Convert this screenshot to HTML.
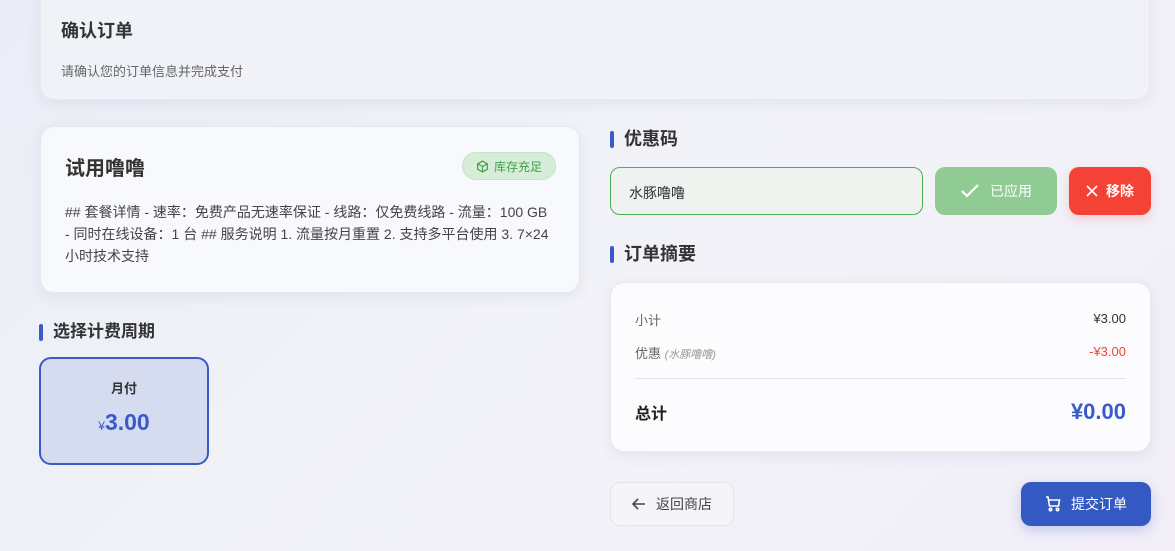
<!DOCTYPE html>
<html><head><meta charset="utf-8"><style>
*{box-sizing:border-box;margin:0;padding:0}
body{width:1175px;height:551px;overflow:hidden;font-family:"Liberation Sans","Noto Sans CJK SC",sans-serif;background:linear-gradient(135deg,#eaedf6 0%,#f2f3f8 50%,#f1eef8 100%);position:relative;color:#333}
.card{position:absolute;background:rgba(255,255,255,.75);border:1px solid #e6e8ef;border-radius:14px;box-shadow:0 4px 14px rgba(60,70,120,.08)}
.h{position:absolute;font-size:18px;font-weight:bold;color:#333;padding-left:14px;line-height:22px}
.h:before{content:"";position:absolute;left:0;top:3px;width:4px;height:17px;border-radius:2px;background:#3a5bc7}
.btn{position:absolute;border-radius:10px;display:flex;align-items:center;justify-content:center;font-size:14px}
</style></head><body>
<div class="card" style="left:40px;top:-20px;width:1110px;height:120px;background:rgba(240,242,248,.8)">
 <div style="position:absolute;left:20px;top:36px;font-size:18px;font-weight:bold;color:#333">确认订单</div>
 <div style="position:absolute;left:20px;top:80px;font-size:13px;color:#666">请确认您的订单信息并完成支付</div>
</div>
<div class="card" style="left:40px;top:126px;width:540px;height:167px;background:#f8f9fc">
 <div style="position:absolute;left:24px;top:25px;font-size:20px;font-weight:bold;color:#333">试用噜噜</div>
 <div style="position:absolute;left:421px;top:25px;width:94px;height:28px;border-radius:14px;background:#d6eed7;border:1px solid #c3e4c4;color:#43a047;font-size:12px;display:flex;align-items:center;justify-content:center;gap:5px">
  <svg width="13" height="13" viewBox="0 0 24 24" fill="none" stroke="#43a047" stroke-width="2.2"><path d="M12 2l9 5v10l-9 5-9-5V7z M3 7l9 5 9-5 M12 12v10"/></svg>库存充足</div>
 <div style="position:absolute;left:24px;top:74px;width:490px;font-size:14px;line-height:22px;color:#444">## 套餐详情 - 速率：免费产品无速率保证 - 线路：仅免费线路 - 流量：100 GB - 同时在线设备：1 台 ## 服务说明 1. 流量按月重置 2. 支持多平台使用 3. 7×24小时技术支持</div>
</div>
<div class="h" style="left:39px;top:321px;font-size:17px">选择计费周期</div>
<div style="position:absolute;left:39px;top:357px;width:170px;height:108px;border:2px solid #3a5bc7;border-radius:12px;background:#d6dcf0;text-align:center">
 <div style="margin-top:19px;font-size:13px;font-weight:bold;color:#333">月付</div>
 <div style="margin-top:12px;color:#3a5bc7;font-weight:bold;font-size:23px"><span style="font-size:12px;font-weight:normal">¥</span>3.00</div>
</div>
<div class="h" style="left:610px;top:128px">优惠码</div>
<div style="position:absolute;left:610px;top:167px;width:313px;height:48px;border:1px solid #4caf50;border-radius:10px;background:#eef3ef;font-size:14px;color:#333;padding:15px 0 0 18px">水豚噜噜</div>
<div class="btn" style="left:935px;top:167px;width:122px;height:48px;background:#8fcb93;color:#fff;gap:10px"><svg width="20" height="16" viewBox="0 0 20 16" fill="none" stroke="#fff" stroke-width="2.2"><path d="M2 8l5 5L18 2"/></svg>已应用</div>
<div class="btn" style="left:1069px;top:167px;width:82px;height:48px;background:#f44336;color:#fff;gap:8px;font-weight:bold;box-shadow:0 4px 10px rgba(244,67,54,.2)"><svg width="12" height="12" viewBox="0 0 12 12" stroke="#fff" stroke-width="1.6"><path d="M1 1l10 10M11 1L1 11"/></svg>移除</div>
<div class="h" style="left:610px;top:243px">订单摘要</div>
<div class="card" style="left:610px;top:282px;width:541px;height:170px;background:#fcfbfe">
 <div style="position:absolute;left:24px;top:27px;font-size:13px;color:#666">小计</div>
 <div style="position:absolute;right:24px;top:28px;font-size:13px;color:#333">¥3.00</div>
 <div style="position:absolute;left:24px;top:60px;font-size:13px;color:#666">优惠 <i style="font-size:11px;color:#999">(水豚噜噜)</i></div>
 <div style="position:absolute;right:24px;top:61px;font-size:13px;color:#f44336">-¥3.00</div>
 <div style="position:absolute;left:24px;right:24px;top:95px;border-top:1px solid #e3e3ea"></div>
 <div style="position:absolute;left:24px;top:117px;font-size:16px;font-weight:bold;color:#222">总计</div>
 <div style="position:absolute;right:24px;top:116px;font-size:22px;font-weight:bold;color:#3a5bc7">¥0.00</div>
</div>
<div class="btn" style="left:610px;top:482px;width:124px;height:44px;background:#f4f5f9;border:1px solid #e4e5ea;color:#444;gap:10px"><svg width="14" height="12" viewBox="0 0 14 12" fill="none" stroke="#444" stroke-width="1.6"><path d="M13 6H2M6 1L1 6l5 5"/></svg>返回商店</div>
<div class="btn" style="left:1021px;top:482px;width:130px;height:44px;background:#3459c2;color:#fff;gap:10px;box-shadow:0 4px 12px rgba(52,89,194,.25)"><svg width="16" height="16" viewBox="0 0 16 16" fill="none" stroke="#fff" stroke-width="1.6"><path d="M1 1h2l1.5 9h9l1-6H4"/><circle cx="5.5" cy="13.5" r="1.2"/><circle cx="12.5" cy="13.5" r="1.2"/></svg>提交订单</div>
</body></html>
